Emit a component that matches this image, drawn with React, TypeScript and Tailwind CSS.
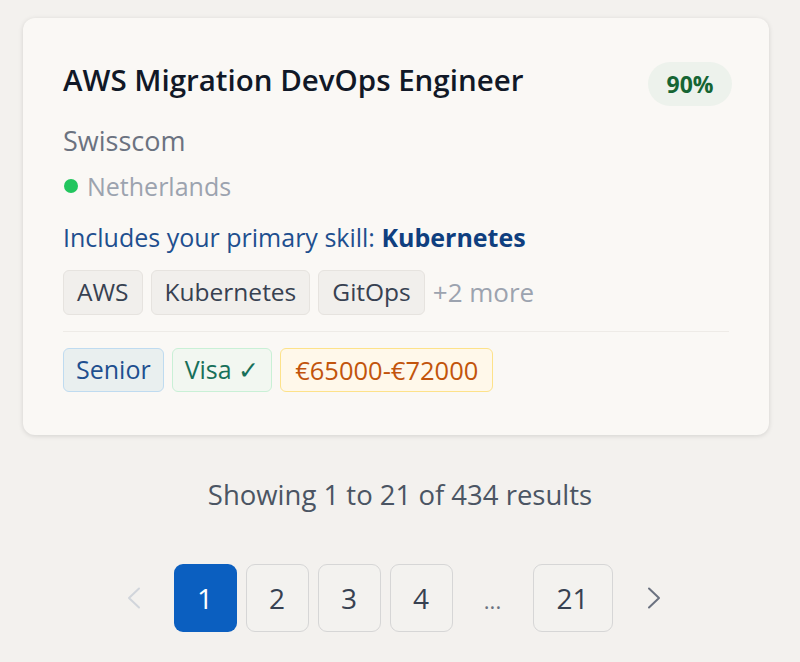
const skills = ["AWS", "Kubernetes", "GitOps"];
const pages = ["1", "2", "3", "4"];

function Chevron({ dir }: { dir: "left" | "right" }) {
  return (
    <svg width="16" height="22" viewBox="0 0 16 22" fill="none" stroke="currentColor" strokeWidth="2" strokeLinecap="round" strokeLinejoin="round">
      {dir === "left" ? <path d="M13 1.5 3 11l10 9.5" /> : <path d="M3 1.5 13 11 3 20.5" />}
    </svg>
  );
}

export default function App() {
  return (
    <main
      className="min-h-[662px] w-[800px] bg-[#f3f1ee] pt-[18px]"
      style={{ fontFamily: '"Open Sans", "Noto Sans", sans-serif' }}
    >
      <div className="ml-[23px] w-[746px] rounded-[12px] bg-[#faf8f5] px-[40px] pt-[42px] pb-[43px] shadow-[0_1px_5px_rgba(0,0,0,0.13)]">
        <div className="flex items-start justify-between">
          <h2 className="text-[29.5px] font-semibold leading-[40px] text-[#111827]">AWS Migration DevOps Engineer</h2>
          <span className="mt-[2px] mr-[-3px] flex h-[44px] w-[84px] items-center justify-center rounded-full bg-[#edf2ec] text-[23px] font-bold text-[#166534]">
            90%
          </span>
        </div>
        <p className="mt-[17px] text-[27px] leading-[36px] text-[#6b7280]">Swisscom</p>
        <div className="mt-[10px] flex items-center gap-[9px] text-[25px] leading-[34px] text-[#9ca3af]">
          <span className="ml-[1px] h-[14px] w-[14px] rounded-full bg-[#22c55e]" />
          Netherlands
        </div>
        <p className="mt-[18px] text-[25px] leading-[32px] text-[#1e4f8f]">
          Includes your primary skill: <span className="font-bold text-[#0f3f7f]">Kubernetes</span>
        </p>
        <div className="mt-[17px] flex items-center gap-[8px]">
          {skills.map((s) => (
            <span
              key={s}
              className="flex h-[45px] items-center rounded-[6px] border border-[#e6e3df] bg-[#f1efec] px-[13px] text-[24.5px] text-[#374151]"
            >
              {s}
            </span>
          ))}
          <span className="text-[26px] text-[#9ca3af]">+2 more</span>
        </div>
        <div className="mt-[16px] border-t border-[#eeebe7]" />
        <div className="mt-[16px] flex items-center gap-[8px]">
          <span className="flex h-[44px] items-center rounded-[6px] border border-[#bfdbf0] bg-[#e9efef] px-[12px] text-[25px] text-[#1e4f8f]">
            Senior
          </span>
          <span className="flex h-[44px] items-center rounded-[6px] border border-[#c9f0d6] bg-[#f2f7f1] px-[12px] text-[25px] text-[#17705a]">
            Visa ✓
          </span>
          <span className="flex h-[44px] items-center rounded-[6px] border border-[#fde28a] bg-[#fff8ea] px-[14px] text-[25.5px] text-[#c2540c]">
            €65000-€72000
          </span>
        </div>
      </div>

      <p className="mt-[42px] text-center text-[27.5px] leading-[36px] text-[#4b5563]">Showing 1 to 21 of 434 results</p>

      <nav className="mt-[51px] flex items-center justify-center pr-[13px]">
        <span className="mr-[32px] text-[#d1d5db]">
          <Chevron dir="left" />
        </span>
        <div className="flex items-center gap-[9px]">
          {pages.map((p) => (
            <span
              key={p}
              className={
                p === "1"
                  ? "flex h-[68px] w-[63px] items-center justify-center rounded-[9px] bg-[#0b5fc0] text-[28px] text-white"
                  : "flex h-[68px] w-[63px] items-center justify-center rounded-[9px] border border-[#d6d6d6] bg-[#f3f2ef] text-[28px] text-[#374151]"
              }
            >
              {p}
            </span>
          ))}
          <span className="w-[62px] pt-[4px] text-center text-[22px] text-[#6b7280]">...</span>
          <span className="flex h-[68px] w-[80px] items-center justify-center rounded-[9px] border border-[#d6d6d6] bg-[#f3f2ef] text-[28px] text-[#374151]">
            21
          </span>
        </div>
        <span className="ml-[33px] text-[#6b7280]">
          <Chevron dir="right" />
        </span>
      </nav>
    </main>
  );
}
